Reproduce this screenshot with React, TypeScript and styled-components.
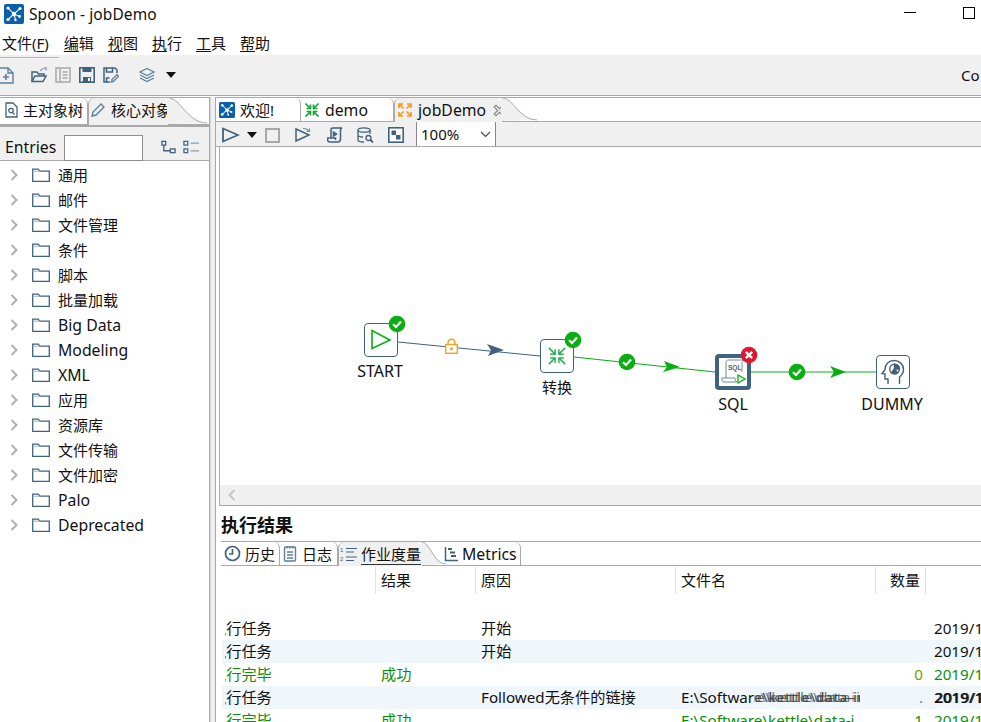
import React from "react";
import styled, { createGlobalStyle } from "styled-components";

const Global = createGlobalStyle`
  html, body { margin: 0; padding: 0; background: #fff; }
  #root { width: 981px; height: 722px; overflow: hidden; }
  * { box-sizing: border-box; }
  svg { flex: none; }
`;

const FONT = `"Noto Sans", "Noto Sans CJK SC", sans-serif`;
const LINE = "#a9a9a9";
const PANEL = "#f0f0f0";
const BLUE = "#41627e";

const Shell = styled.div`
  width: 981px; height: 722px; overflow: hidden; display: flex; flex-direction: column;
  font-family: ${FONT}; font-size: 15px; color: #111; background: #fff; line-height: 20px;
`;
const TitleBar = styled.div`
  height: 28px; flex: none; display: flex; align-items: center; padding: 0 6px 0 4px; gap: 5px; font-size: 15.5px;
`;
const TitleText = styled.span`flex: 1; letter-spacing: 0.1px;`;
const WinMin = styled.span`width: 12px; height: 1px; background: #000; margin: 0 42px 4px 0;`;
const WinMax = styled.span`width: 12px; height: 12px; border: 1px solid #000; margin-bottom: 2px;`;
const MenuBar = styled.div`
  height: 27px; flex: none; display: flex; align-items: center; padding: 3px 0 0 2px; gap: 14px; font-size: 15px;
`;
const MenuItem = styled.span<{ $extra?: number }>`
  display: inline-block; margin-right: ${p => p.$extra ?? 0}px;
  u { text-underline-offset: 2px; }
`;
const MainToolbar = styled.div`
  height: 40px; flex: none; background: ${PANEL}; display: flex; align-items: center; position: relative;
`;
const MenuRule = styled.div`position: absolute; left: 0; top: 2px; width: 59px; height: 1px; background: #b8b8b8;`;
const ToolGroup = styled.div<{ $left: number; $gap: number }>`
  display: flex; align-items: center; gap: ${p => p.$gap}px; margin-left: ${p => p.$left}px;
`;
const ConnectLabel = styled.span`margin-left: auto; width: 20px; overflow: hidden; font-size: 15px; white-space: nowrap; flex: none;`;
const Workspace = styled.div`
  flex: 1; min-height: 0; display: flex; border-top: 1px solid ${LINE}; padding-top: 1px; background: #fff;
`;
const LeftPanel = styled.div`
  width: 210px; flex: none; display: flex; flex-direction: column; border-right: 1px solid ${LINE};
`;
const Sash = styled.div`width: 6px; flex: none; background: ${PANEL}; border-right: 1px solid ${LINE}; border-left: 1px solid #d8d8d8;`;
const RightPanel = styled.div`flex: 1; min-width: 0; display: flex; flex-direction: column;`;

const Latin = styled.span`font-size: 15.8px;`;

const TabStrip = styled.div<{ $h: number }>`
  height: ${p => p.$h}px; flex: none; display: flex; border-top: 1px solid ${LINE}; border-bottom: 1px solid ${LINE}; position: relative; background: #fff;
`;
const Tab = styled.div<{ $w: number; $active?: boolean; $pad: number; $lift?: number; $gap?: number }>`
  width: ${p => p.$w}px; flex: none; display: flex; align-items: center; gap: ${p => p.$gap ?? 5}px; padding-left: ${p => p.$pad}px; white-space: nowrap;
  padding-bottom: ${p => p.$lift ?? 0}px;
  position: relative; margin-bottom: ${p => (p.$active ? "-1px" : "0")};
  background: ${p => (p.$active ? PANEL : "#fff")};
  border-right: ${p => (p.$active ? "0" : `1px solid ${LINE}`)};
  border-top-right-radius: 6px;
  border-top-left-radius: ${p => (p.$active ? "6px" : "0")};
  border-left: ${p => (p.$active ? `1px solid ${LINE}` : "0")};
`;
const TabGap = styled.div<{ $w: number }>`width: ${p => p.$w}px; flex: none;`;
const TabCurve = styled.svg`position: absolute; left: 100%; top: -1px; margin-left: -1px; z-index: 2;`;
const Focused = styled.span`border-bottom: 1px solid #333; line-height: 19px; margin-top: 2px;`;
const TightText = styled.span<{ $shift: number }>`margin-left: ${p => p.$shift}px;`;

const EntriesRow = styled.div`
  height: 36px; flex: none; display: flex; align-items: center; padding: 6px 0 0 5px; border-bottom: 1px solid ${LINE}; background: ${PANEL};
  border-top: 2px solid ${LINE};
`;
const EntriesInput = styled.div`
  width: 79px; height: 26px; margin: 0 18px -1px 8px; background: #fff; border: 1px solid #8e8e8e; align-self: flex-end;
`;
const TreeList = styled.div`flex: 1; padding-top: 1px; overflow: hidden;`;
const TreeRow = styled.div`height: 25px; display: flex; align-items: center; padding-left: 10px;`;
const TreeLabel = styled.span`margin-left: 8px;`;

const EditorToolbar = styled.div`
  height: 25px; flex: none; display: flex; align-items: center; background: ${PANEL}; border-bottom: 1px solid ${LINE}; padding: 2px 0 0 6px; position: relative;
`;
const CaretSlot = styled.span`margin: 0 8px 0 7px; display: flex;`;
const ToolIcon = styled.span<{ $left: number }>`margin-left: ${p => p.$left}px; display: flex;`;
const ZoomBox = styled.div`
  width: 80px; height: 24px; margin: -2px 0 0 12px; background: #fff; border-left: 1px solid #888; border-right: 1px solid #888; display: flex; align-items: center;
  justify-content: space-between; padding: 0 4px; font-size: 15px; align-self: flex-start;
`;
const CanvasArea = styled.div`
  height: 338px; flex: none; margin-left: 3px; border-left: 1px solid ${LINE}; background: #fff; position: relative; overflow: hidden;
`;
/* Canvas offset: x = page - 220, y = page - 147 */
const Node = styled.div<{ $x: number; $y: number; $thick?: boolean; $size?: number }>`
  position: absolute; left: ${p => p.$x}px; top: ${p => p.$y}px;
  width: ${p => p.$size ?? 34}px; height: ${p => p.$size ?? 34}px; background: #fff;
  border: ${p => (p.$thick ? "4px" : "1px")} solid ${BLUE}; border-radius: 4px;
  display: flex; align-items: center; justify-content: center;
`;
const NodeLabel = styled.span<{ $x: number; $y: number }>`
  position: absolute; left: ${p => p.$x}px; top: ${p => p.$y}px; transform: translateX(-50%); white-space: nowrap; font-size: 16px;
`;
const CnNodeLabel = styled(NodeLabel)`font-size: 15px;`;
const Badge = styled.svg<{ $x: number; $y: number }>`position: absolute; left: ${p => p.$x - 9}px; top: ${p => p.$y - 9}px;`;
const HopLayer = styled.svg`position: absolute; left: 0; top: 0;`;
const HScroll = styled.div`
  height: 21px; flex: none; margin-left: 3px; background: ${PANEL}; border-left: 1px solid ${LINE}; border-bottom: 1px solid ${LINE}; display: flex; align-items: center; padding-left: 8px;
`;
const ResultsPane = styled.div`flex: 1; min-height: 0; display: flex; flex-direction: column; padding-left: 5px;`;
const ResultsTitle = styled.div`height: 35px; flex: none; display: flex; align-items: center; font-size: 18px; font-weight: 700; padding-top: 3px;`;
const TableHead = styled.div`display: flex; height: 27px; flex: none; margin-top: 1px; margin-left: 1px;`;
const HeadCell = styled.div<{ $w: number; $right?: boolean }>`
  width: ${p => p.$w}px; flex: none; border-right: 1px solid #e2e2e2; padding: 0 5px 2px; display: flex; align-items: center;
  justify-content: ${p => (p.$right ? "flex-end" : "flex-start")}; font-size: 15px;
`;
const Spacer = styled.div`height: 23px; flex: none;`;
const Row = styled.div<{ $alt: boolean; $ok: boolean }>`
  height: 23px; flex: none; display: flex; align-items: center; margin-left: 1px; padding-bottom: 2px; position: relative; white-space: nowrap;
  background: ${p => (p.$alt ? "#eff7fd" : "#fff")}; color: ${p => (p.$ok ? "#0a8f0a" : "#111")}; font-size: 15.2px;
`;
const Cell = styled.div<{ $w: number; $right?: boolean; $pad?: number }>`
  width: ${p => p.$w}px; flex: none; overflow: hidden; padding-left: ${p => p.$pad ?? 5}px; text-align: ${p => (p.$right ? "right" : "left")};
  padding-right: ${p => (p.$right ? 3 : 0)}px;
`;
const ClipCell = styled.div<{ $w: number }>`width: ${p => p.$w}px; margin-left: 3px; flex: none; overflow: hidden;`;
const ClippedStart = styled.span`display: inline-block; margin-left: -14px;`;
const CountZero = styled.span`color: #6aa000;`;
const CountFaint = styled.span`color: #4a90c0;`;
const Garbled = styled.span`
  display: inline-block; width: 106px; overflow: hidden; vertical-align: bottom; font-weight: 500; font-size: 13px; letter-spacing: 1px; color: #444;
  text-shadow: 3px 0 0 rgba(30, 30, 30, 0.6), -2px 0 0 rgba(30, 30, 30, 0.4);
`;
const GarbledDate = styled.span`font-weight: 500; text-shadow: 1px 0 0 #444;`;

const St = { fill: "none", stroke: BLUE, strokeWidth: 1.5 } as const;

const SpoonLogo = ({ s = 17 }: { s?: number }) => (
  <svg width={s} height={s} viewBox="0 0 20 20">
    <rect width="20" height="20" rx="2" fill="#0b5ea8" />
    <g stroke="#cfe3f5" strokeWidth="1.3">
      <path d="M10 10 4 4M10 10 16 4.5M10 10 4 15.5M10 10 15.5 12.5M10 10l1.5 6" />
    </g>
    <g fill="#fff">
      <circle cx="10" cy="10" r="2.2" /><circle cx="4" cy="4" r="1.6" /><circle cx="16" cy="4.5" r="1.6" />
      <circle cx="4" cy="15.5" r="1.6" /><circle cx="15.5" cy="12.5" r="1.4" /><circle cx="11.5" cy="16" r="1.2" />
    </g>
  </svg>
);
const Arrows = ({ c, s = 16, out, w = 1.7 }: { c: string; s?: number; out?: boolean; w?: number }) => (
  <svg width={s} height={s} viewBox="0 0 16 16" fill="none" stroke={c} strokeWidth={w}>
    {out ? (
      <>
        <path d="M6.5 6.5 2 2M2 6V2h4" /><path d="M9.5 6.500 14 2M10 2h4v4" /><path d="M6.5 9.5 2 14M2 10v4h4" /><path d="M9.5 9.5 14 14M14 10v4h-4" />
      </>
    ) : (
      <>
        <path d="M1.5 1.5 6.5 6.5M2.5 6.5h4v-4" /><path d="M14.5 1.5 9.5 6.5M13.5 6.5h-4v-4" /><path d="M1.5 14.5 6.5 9.5M2.5 9.5h4v4" /><path d="M14.5 14.5 9.5 9.5M13.5 9.5h-4v4" />
      </>
    )}
  </svg>
);
const Caret = () => (
  <svg width="10" height="6" viewBox="0 0 10 6"><path d="M0 0h10L5 6z" fill="#111" /></svg>
);
const Chevron = () => (
  <svg width="8" height="12" viewBox="0 0 8 12" fill="none" stroke="#b0b0b0" strokeWidth="2"><path d="M1.5 1 6.5 6 1.5 11" /></svg>
);
const FolderIcon = styled.svg`margin-left: 14px;`;
const Folder = () => (
  <FolderIcon width="18" height="14" viewBox="0 0 18 14" fill="#fff" stroke={BLUE} strokeWidth="1.3">
    <path d="M.7 13.3V1.2h5.6l1.5 2h9.500v10.100z" />
    <path d="M.7 3.2h7" stroke="#9fb3c4" strokeWidth="1" />
  </FolderIcon>
);
const CurveShape = ({ w, h }: { w: number; h: number }) => (
  <TabCurve width={w} height={h} viewBox={`0 0 ${w} ${h}`}>
    <path d={`M0 0.5 C${w * 0.35} 0.5 ${w * 0.5} ${h - 1} ${w} ${h - 1} L0 ${h} Z`} fill={PANEL} />
    <path d={`M0 0.5 C${w * 0.35} 0.5 ${w * 0.5} ${h - 1} ${w} ${h - 1}`} fill="none" stroke={LINE} />
  </TabCurve>
);
const CheckBadge = ({ x, y }: { x: number; y: number }) => (
  <Badge $x={x} $y={y} width="18" height="18" viewBox="0 0 18 18">
    <circle cx="9" cy="9" r="8.3" fill="#0aad12" />
    <path d="M5 9.3 8 12l5-5.5" fill="none" stroke="#fff" strokeWidth="2.2" />
  </Badge>
);
const ErrBadge = ({ x, y }: { x: number; y: number }) => (
  <Badge $x={x} $y={y} width="18" height="18" viewBox="0 0 18 18">
    <circle cx="9" cy="9" r="8.3" fill="#e3142f" />
    <path d="M5.8 5.8l6.4 6.4M12.2 5.8l-6.4 6.4" fill="none" stroke="#fff" strokeWidth="2.4" />
  </Badge>
);

const menus: [string, string][] = [["编", "辑"], ["视", "图"], ["执", "行"], ["工", "具"], ["帮", "助"]];
const tree = ["通用", "邮件", "文件管理", "条件", "脚本", "批量加载", "Big Data", "Modeling", "XML", "应用", "资源库", "文件传输", "文件加密", "Palo", "Deprecated"];
const isLatin = (t: string) => /^[A-Za-z ]+$/.test(t);
const cols = [154, 100, 200, 200, 50, 100];
const rows = [
  { a: "执行任务", b: "", c: "开始", d: "", n: "", ok: false },
  { a: "执行任务", b: "", c: "开始", d: "", n: "", ok: false },
  { a: "执行完毕", b: "成功", c: "", d: "", n: "0", ok: true },
  { a: "执行任务", b: "", c: "Followed无条件的链接", d: "E:\\Softwar", n: ".", ok: false, garbled: "e\\kettle\\data-integ" },
  { a: "执行完毕", b: "成功", c: "", d: "E:\\Software\\kettle\\data-i", n: "1", ok: true },
];

export default function App() {
  return (
    <Shell>
      <Global />
      <TitleBar>
        <SpoonLogo s={20} />
        <TitleText>Spoon - jobDemo</TitleText>
        <WinMin />
        <WinMax />
      </TitleBar>
      <MenuBar>
        <MenuItem $extra={1}>文件(<u>F</u>)</MenuItem>
        {menus.map(([f, r]) => (
          <MenuItem key={f}><u>{f}</u>{r}</MenuItem>
        ))}
      </MenuBar>
      <MainToolbar>
        <MenuRule />
        <ToolGroup $left={0} $gap={0}>
          <svg width="14" height="17" viewBox="0 0 14 17" fill="none" stroke="#5f7f99" strokeWidth="1.4">
            <path d="M-1 1h9l5 5v10H-1zM8 1v5h5" /><path d="M6 7v6M3 10h6" strokeWidth="1.6" />
          </svg>
        </ToolGroup>
        <ToolGroup $left={17} $gap={8}>
          <svg width="16" height="16" viewBox="0 0 16 16" {...St}>
            <path d="M1 14.5V5h5l1.5 2H13v2" /><path d="M1 14.5h11L15 9H4z" /><path d="M9 4l3-2.5M12.500 1H15v2.500" stroke="#8aa0b4" />
          </svg>
          <svg width="16" height="16" viewBox="0 0 16 16" fill="none" stroke="#a8a8a8" strokeWidth="1.5">
            <rect x="1" y="1" width="14" height="14" /><path d="M5 1v14M7.5 5h5M7.5 8h5M7.5 11h5" />
          </svg>
          <svg width="16" height="16" viewBox="0 0 16 16">
            <rect x="0.8" y="0.8" width="14.4" height="14.4" fill="none" stroke={BLUE} strokeWidth="1.6" />
            <path d="M3.5 1h9v4h-9zM4 10h8v5H4z" fill={BLUE} />
            <path d="M9 11h2v3H9z" fill="#fff" />
          </svg>
          <svg width="16" height="16" viewBox="0 0 16 16" {...St}>
            <path d="M7 15H1V1h11l2 2v3" /><path d="M3.5 1v4h6V1M3.5 15v-4h3" /><path d="M8.5 15l.5-2.5L14 7.5l1.5 1.8-5 5z" stroke="#6d8aa2" />
          </svg>
        </ToolGroup>
        <ToolGroup $left={20} $gap={11}>
          <svg width="16" height="16" viewBox="0 0 16 16" fill="none" stroke="#5f7f99" strokeWidth="1.2">
            <path d="M8 1.5 15 5 8 8.5 1 5z" /><path d="M1 8l7 3.5L15 8" /><path d="M1 11l7 3.5 7-3.5" />
          </svg>
          <Caret />
        </ToolGroup>
        <ConnectLabel>Co</ConnectLabel>
      </MainToolbar>
      <Workspace>
        <LeftPanel>
          <TabStrip $h={28}>
            <Tab $w={88} $pad={5} $lift={2}>
              <svg width="13" height="16" viewBox="0 0 13 16" fill="none" stroke={BLUE} strokeWidth="1.3">
                <path d="M1 1h7l4 4v10H1z" /><circle cx="6" cy="8.500" r="2.200" /><path d="M7.500 10.500l2 2" />
              </svg>
              主对象树
            </Tab>
            <Tab $w={80} $active $pad={1} $lift={3}>
              <svg width="16" height="16" viewBox="0 0 16 16" fill="none" stroke="#5f7f99" strokeWidth="1.4">
                <path d="M2 14l1-4L11 2l3 3-8 8z" />
              </svg>
              核心对象
              <CurveShape w={40} h={27} />
            </Tab>
          </TabStrip>
          <EntriesRow>
            <Latin>Entries</Latin>
            <EntriesInput />
            <svg width="15" height="14" viewBox="0 0 16 14" fill="none" stroke={BLUE} strokeWidth="1.400">
              <rect x="1" y="1" width="4" height="4" /><rect x="10" y="9" width="5" height="4" /><path d="M3 5v6h7" />
            </svg>
            <svg width="17" height="14" viewBox="0 0 18 14" fill="none" stroke={BLUE} strokeWidth="1.300" style={{ marginLeft: 7 }}>
              <rect x="1" y="1" width="4" height="4" /><rect x="1" y="9" width="4" height="4" /><path d="M8 3h9M8 11h9" stroke="#8a9fb2" />
            </svg>
          </EntriesRow>
          <TreeList>
            {tree.map(t => (
              <TreeRow key={t}>
                <Chevron />
                <Folder />
                <TreeLabel>{isLatin(t) ? <Latin>{t}</Latin> : t}</TreeLabel>
              </TreeRow>
            ))}
          </TreeList>
        </LeftPanel>
        <Sash />
        <RightPanel>
          <TabStrip $h={25}>
            <Tab $w={85} $pad={3}>
              <SpoonLogo s={16} />
              欢迎!
            </Tab>
            <Tab $w={93} $pad={3}>
              <Arrows c="#16a637" />
              <Latin>demo</Latin>
            </Tab>
            <Tab $w={108} $active $pad={2}>
              <Arrows c="#f59a1b" out />
              <Latin>jobDemo</Latin>
              <svg width="13" height="13" viewBox="0 0 11 11" fill="none" stroke="#808080" strokeWidth="0.9" style={{ marginLeft: 2 }}>
                <path d="M1 2.500 2.500 1 5.500 4l3-3L10 2.500l-3 3 3 3L8.500 10l-3-3-3 3L1 8.500l3-3z" />
              </svg>
              <CurveShape w={36} h={24} />
            </Tab>
          </TabStrip>
          <EditorToolbar>
            <svg width="18" height="16" viewBox="0 0 18 16" fill="none" stroke={BLUE} strokeWidth="1.8">
              <path d="M1 1.5v13L16 8z" />
            </svg>
            <CaretSlot><Caret /></CaretSlot>
            <svg width="15" height="15" viewBox="0 0 15 15"><rect x="1" y="1" width="13" height="13" fill="none" stroke="#a8a8a8" strokeWidth="2" /></svg>
            <ToolIcon $left={15}>
              <svg width="16" height="16" viewBox="0 0 16 16" fill="none" stroke={BLUE} strokeWidth="1.5">
                <path d="M1 2v12l13-6z" /><path d="M8 1.5c3 0 5 1 6 3M14.500 1.500v3h-3" stroke="#6d8aa2" strokeWidth="1.2" />
              </svg>
            </ToolIcon>
            <ToolIcon $left={16}>
              <svg width="16" height="16" viewBox="0 0 16 16" fill="none" stroke={BLUE} strokeWidth="1.5">
                <path d="M4 11V2.500C4 1.500 5 1 6 1h9c-1 .5-1.500 1.300-1.500 2v9c0 1.500-1 3-3 3H3c-1.500 0-2.500-1-2.500-2.500V11h8v2" /><path d="M6.500 5l3 2-3 2z" fill={BLUE} />
              </svg>
            </ToolIcon>
            <ToolIcon $left={14}>
              <svg width="17" height="16" viewBox="0 0 17 16" fill="none" stroke={BLUE} strokeWidth="1.3">
                <ellipse cx="7" cy="3" rx="6" ry="2.200" /><path d="M1 3v10c0 1.200 2.500 2 6 2M13 3v4M1 8c0 1.200 2.500 2 5 2" /><circle cx="11.500" cy="11" r="2.500" /><path d="M13.500 13l2.500 2.500" strokeWidth="1.8" />
              </svg>
            </ToolIcon>
            <ToolIcon $left={14}>
              <svg width="16" height="16" viewBox="0 0 16 16">
                <rect x="0.8" y="0.8" width="14.4" height="14.4" fill="#fff" stroke={BLUE} strokeWidth="1.6" />
                <rect x="3.5" y="3.5" width="4.5" height="4.5" fill={BLUE} /><rect x="8" y="8" width="4.5" height="4.5" fill={BLUE} />
              </svg>
            </ToolIcon>
            <ZoomBox>
              100%
              <svg width="11" height="7" viewBox="0 0 11 7" fill="none" stroke="#444" strokeWidth="1.1"><path d="M1 1l4.500 4.500L10 1" /></svg>
            </ZoomBox>
          </EditorToolbar>
          <CanvasArea>
            <HopLayer width="761" height="338" viewBox="0 0 761 338">
              <path d="M178 195 320 209" stroke={BLUE} strokeWidth="1" fill="none" />
              <path d="M267 197 284 203 268 209 271 203z" fill={BLUE} />
              <path d="M354 210 495 225" stroke="#0aad12" strokeWidth="1" fill="none" />
              <path d="M444 214 460 220 443 225 447 220z" fill="#0aad12" />
              <path d="M531 225H656" stroke="#0aad12" strokeWidth="1" fill="none" />
              <path d="M610 219 626 225 610 231 614 225z" fill="#0aad12" />
              <g transform="translate(225 192)">
                <rect x="0.7" y="5.500" width="11.600" height="8.800" fill="#fff" stroke="#f5a01e" strokeWidth="1.4" />
                <path d="M3 5.500V3.500a3.400 3.200 0 0 1 7 0v2" fill="none" stroke="#f5a01e" strokeWidth="1.4" />
                <rect x="5.200" y="8.500" width="2.600" height="2.600" fill="#f5a01e" />
              </g>
            </HopLayer>
            <Node $x={144} $y={176}>
              <svg width="22" height="22" viewBox="0 0 22 22" fill="none" stroke="#0aad12" strokeWidth="1.6"><path d="M2 1.500v18L20 11z" /></svg>
            </Node>
            <CheckBadge x={177} y={177} />
            <NodeLabel $x={160} $y={214}>START</NodeLabel>
            <Node $x={320} $y={192}><Arrows c="#2ab35a" s={20} w={1.2} /></Node>
            <CheckBadge x={353} y={193} />
            <CnNodeLabel $x={337} $y={230}>转换</CnNodeLabel>
            <CheckBadge x={407} y={215} />
            <Node $x={495} $y={207} $thick $size={36}>
              <svg width="26" height="26" viewBox="0 0 26 26" fill="none" stroke="#6d8aa2" strokeWidth="1">
                <path d="M6 19V3.500C6 2 7 1 8.500 1H24c-1.500 1-2 2-2 3.500V13" />
                <path d="M2 19h13c0 2 1 4 2 4H4c-1.500 0-2.500-1.500-2-4z" />
                <text x="8" y="11" fontSize="6.5" fontWeight="700" fill="#41627e" stroke="none" fontFamily="Liberation Sans">SQL</text>
                <path d="M18 16v8l7-4z" stroke="#0aad12" strokeWidth="1.3" />
              </svg>
            </Node>
            <ErrBadge x={529} y={208} />
            <NodeLabel $x={513} $y={247}>SQL</NodeLabel>
            <CheckBadge x={577} y={225} />
            <Node $x={656} $y={208}>
              <svg width="26" height="26" viewBox="0 0 26 26" fill="none" stroke={BLUE} strokeWidth="1.4">
                <path d="M8 25v-5H5v-5l-3-.5 3-4C5 5 9 1.500 14 1.500c5.500 0 9.500 4 9.500 9 0 3.500-2 6-4 7.500v7" />
                <circle cx="14.500" cy="10" r="4.800" />
                <path d="M14.500 5.200V10h4.800a4.800 4.800 0 0 0-4.800-4.800z" fill={BLUE} />
                <path d="M14.500 10l-3 3.700 3 1.100a4.800 4.800 0 0 0 3-1.100z" fill={BLUE} />
              </svg>
            </Node>
            <NodeLabel $x={672} $y={247}>DUMMY</NodeLabel>
          </CanvasArea>
          <HScroll>
            <svg width="8" height="12" viewBox="0 0 8 12" fill="none" stroke="#c6c6c6" strokeWidth="2"><path d="M6.500 1 1.500 6l5 5" /></svg>
          </HScroll>
          <ResultsPane>
            <ResultsTitle>执行结果</ResultsTitle>
            <TabStrip $h={25}>
              <Tab $w={59} $pad={3}>
                <svg width="17" height="17" viewBox="0 0 17 17" fill="none" stroke={BLUE} strokeWidth="1.700">
                  <circle cx="8.500" cy="8.500" r="7" /><path d="M8.500 4v5H5" />
                </svg>
                <TightText $shift={-1}>历史</TightText>
              </Tab>
              <Tab $w={58} $pad={3}>
                <svg width="14" height="17" viewBox="0 0 14 17" fill="none" stroke="#5f7f99" strokeWidth="1.400">
                  <rect x="1.500" y="2" width="11" height="14" rx="1" /><path d="M4 1v2.500M7 1v2.500M10 1v2.500M4 7h6M4 10h6M4 13h6" />
                </svg>
                日志
              </Tab>
              <Tab $w={84} $active $pad={1} $gap={3}>
                <svg width="18" height="17" viewBox="0 0 18 17" fill="none" stroke={BLUE} strokeWidth="1.200">
                  <path d="M6 2.500h11M6 6h8M6 11h11M6 14.500h8" />
                  <text x="0" y="6" fontSize="6" fill={BLUE} stroke="none" fontFamily="Liberation Sans">1</text>
                  <text x="0" y="15" fontSize="6" fill={BLUE} stroke="none" fontFamily="Liberation Sans">2</text>
                </svg>
                <Focused>作业度量</Focused>
                <CurveShape w={25} h={24} />
              </Tab>
              <TabGap $w={22} />
              <Tab $w={77} $pad={0}>
                <svg width="15" height="16" viewBox="0 0 15 16" fill="none" stroke={BLUE} strokeWidth="1.500">
                  <path d="M1.500 1v13.500H14" /><path d="M4 3h4M6 6.500h5M7 10h5" strokeWidth="2" />
                </svg>
                <TightText $shift={-2}><Latin>Metrics</Latin></TightText>
              </Tab>
            </TabStrip>
            <TableHead>
              <HeadCell $w={cols[0]} />
              <HeadCell $w={cols[1]}>结果</HeadCell>
              <HeadCell $w={cols[2]}>原因</HeadCell>
              <HeadCell $w={cols[3]}>文件名</HeadCell>
              <HeadCell $w={cols[4]} $right>数量</HeadCell>
            </TableHead>
            <Spacer />
            {rows.map((r, i) => (
              <Row key={i} $alt={i % 2 === 1} $ok={r.ok}>
                <ClipCell $w={cols[0] - 3}><ClippedStart>{r.a}</ClippedStart></ClipCell>
                <Cell $w={cols[1]}>{r.b}</Cell>
                <Cell $w={cols[2]}>{r.c}</Cell>
                <Cell $w={cols[3]}>
                  {r.d}
                  {r.garbled && <Garbled>{r.garbled}</Garbled>}
                </Cell>
                <Cell $w={cols[4]} $right $pad={0}>
                  {r.n === "0" ? <CountZero>0</CountZero> : r.n === "." ? <CountFaint>.</CountFaint> : r.n}
                </Cell>
                <Cell $w={cols[5]} $pad={8}>
                  {r.garbled ? <GarbledDate>2019/11/21</GarbledDate> : "2019/11/21"}
                </Cell>
              </Row>
            ))}
          </ResultsPane>
        </RightPanel>
      </Workspace>
    </Shell>
  );
}
